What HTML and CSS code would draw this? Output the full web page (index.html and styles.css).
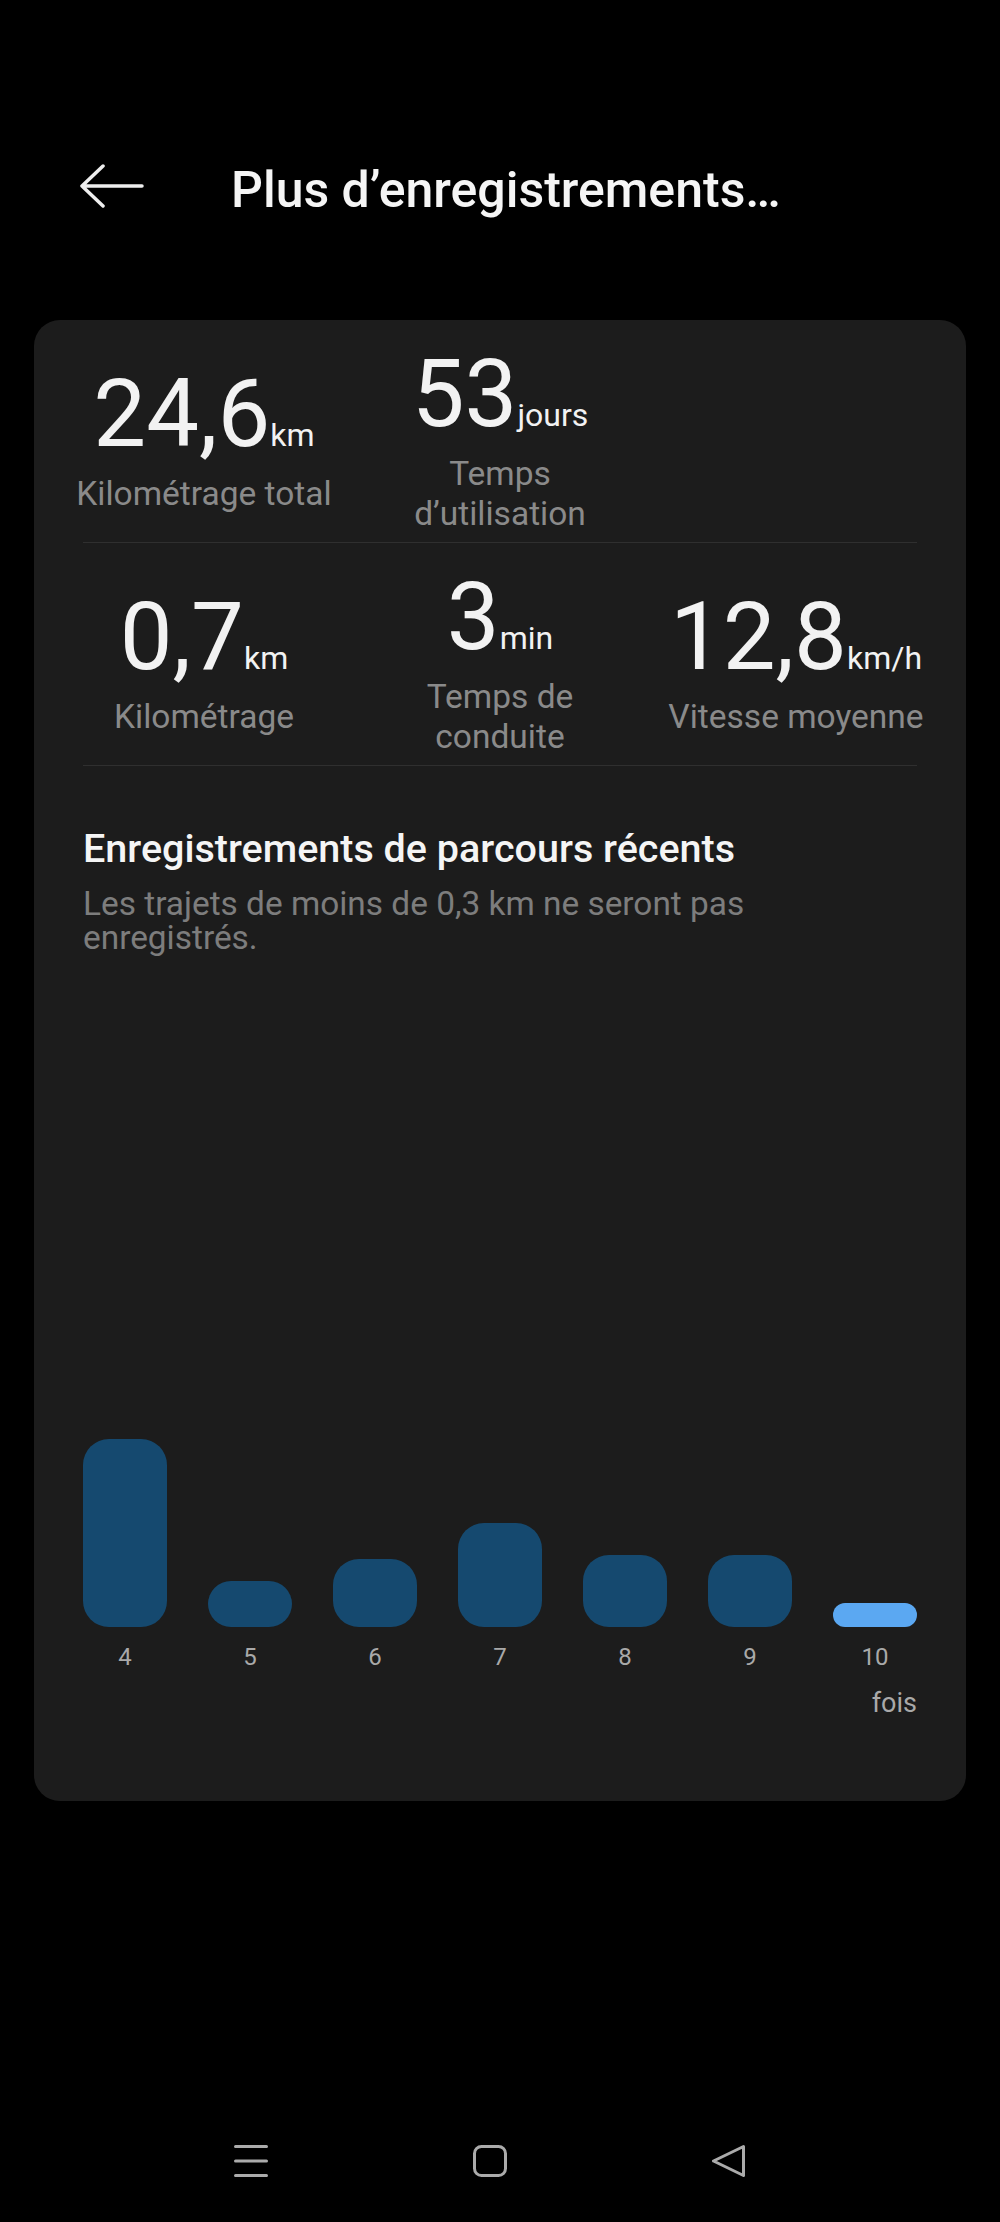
FILE: index.html
```html
<!DOCTYPE html>
<html lang="fr">
<head>
    <meta charset="UTF-8">
    <meta name="viewport" content="width=device-width, initial-scale=1.0">
    <title>Plus d'enregistrements</title>
    <link rel="stylesheet" href="styles.css">
</head>
<body>
    <div class="app">
        <header class="topbar">
            <svg class="back" width="64" height="44" viewBox="0 0 64 44" fill="none" stroke="#eeeeee" stroke-width="3.5" stroke-linecap="round" stroke-linejoin="round">
                <path d="M2 22H62M23 2L2 22L23 42"/>
            </svg>
            <h1 class="titre">Plus d’enregistrements…</h1>
        </header>

        <div class="carte">
            <div class="stats">
                <div class="stat">
                    <div class="valeur">24,6<span class="unite">km</span></div>
                    <div class="libelle">Kilométrage total</div>
                </div>
                <div class="stat">
                    <div class="valeur">53<span class="unite">jours</span></div>
                    <div class="libelle">Temps d’utilisation</div>
                </div>
                <div class="stat"></div>
            </div>
            <div class="separateur"></div>
            <div class="stats">
                <div class="stat">
                    <div class="valeur">0,7<span class="unite">km</span></div>
                    <div class="libelle">Kilométrage</div>
                </div>
                <div class="stat">
                    <div class="valeur">3<span class="unite">min</span></div>
                    <div class="libelle">Temps de conduite</div>
                </div>
                <div class="stat">
                    <div class="valeur">12,8<span class="unite">km/h</span></div>
                    <div class="libelle">Vitesse moyenne</div>
                </div>
            </div>
            <div class="separateur"></div>

            <div class="intro">
                <h2>Enregistrements de parcours récents</h2>
                <p>Les trajets de moins de 0,3 km ne seront pas enregistrés.</p>
            </div>

            <div class="graphique">
                <div class="barres">
                    <div class="colonne">
                        <div class="barre" style="height: 188px"></div>
                        <span class="jour">4</span>
                    </div>
                    <div class="colonne">
                        <div class="barre" style="height: 46px"></div>
                        <span class="jour">5</span>
                    </div>
                    <div class="colonne">
                        <div class="barre" style="height: 68px"></div>
                        <span class="jour">6</span>
                    </div>
                    <div class="colonne">
                        <div class="barre" style="height: 104px"></div>
                        <span class="jour">7</span>
                    </div>
                    <div class="colonne">
                        <div class="barre" style="height: 72px"></div>
                        <span class="jour">8</span>
                    </div>
                    <div class="colonne">
                        <div class="barre" style="height: 72px"></div>
                        <span class="jour">9</span>
                    </div>
                    <div class="colonne">
                        <div class="barre actif" style="height: 24px"></div>
                        <span class="jour">10</span>
                    </div>
                </div>
                <div class="axe">fois</div>
            </div>
        </div>

        <nav class="navigation">
            <svg width="34" height="32" viewBox="0 0 34 32" fill="none" stroke="#ababab" stroke-width="3" stroke-linecap="round">
                <path d="M1.5 1.5H32.5M1.5 16H32.5M1.5 30.5H32.5"/>
            </svg>
            <svg width="34" height="32" viewBox="0 0 34 32" fill="none" stroke="#ababab" stroke-width="3">
                <rect x="1.5" y="1.5" width="31" height="29" rx="7"/>
            </svg>
            <svg width="34" height="32" viewBox="0 0 34 32" fill="none" stroke="#ababab" stroke-width="3" stroke-linejoin="round">
                <path d="M31.5 1.5L1.5 16L31.5 30.5Z"/>
            </svg>
        </nav>
    </div>
</body>
</html>
```

FILE: styles.css
```css
body {
    margin: 0;
    background-color: #000;
    font-family: Roboto, "Noto Sans", Arial, sans-serif;
    color: #f2f2f2;
}
.app {
    height: 2222px;
    display: flex;
    flex-direction: column;
    overflow: hidden;
}
.topbar {
    display: flex;
    align-items: center;
    height: 60px;
    margin-top: 160px;
    padding-left: 80px;
}
.back {
    margin-bottom: 8px;
}
.titre {
    margin: 0 0 0 87px;
    font-size: 50px;
    font-weight: 500;
    line-height: 1.2;
    color: #f5f5f5;
}
.carte {
    background: #1c1c1c;
    border-radius: 26px;
    margin: 100px 34px 0;
    padding: 0 22px;
    height: 1481px;
    box-sizing: border-box;
}
.stats {
    display: grid;
    grid-template-columns: repeat(3, 1fr);
    align-items: center;
    padding: 24px 0 8px;
}
.stat {
    display: flex;
    flex-direction: column;
    align-items: center;
    padding: 0 15px;
    text-align: center;
}
.valeur {
    font-size: 94px;
    line-height: 100px;
    white-space: nowrap;
}
.unite {
    font-size: 32px;
    line-height: 1;
}
.libelle {
    margin-top: 10px;
    font-size: 33.5px;
    line-height: 40px;
    color: #8a8a8a;
}
.separateur {
    height: 1px;
    margin: 0 27px;
    background: #2f2f2f;
}
.intro {
    margin: 60px 27px 0;
    max-width: 700px;
}
.intro h2 {
    margin: 0;
    font-size: 39.5px;
    font-weight: 500;
    line-height: 46px;
    color: #f5f5f5;
}
.intro p {
    margin: 15px 0 0;
    font-size: 33.4px;
    line-height: 34px;
    color: #7d7d7d;
}
.graphique {
    margin: 72px 27px 0;
}
.barres {
    display: flex;
    gap: 41px;
    height: 644px;
    align-items: flex-end;
}
.colonne {
    width: 84px;
    display: flex;
    flex-direction: column;
    align-items: center;
}
.barre {
    width: 100%;
    border-radius: 26px;
    background-color: #15496f;
}
.barre.actif {
    background-color: #5ba8f2;
}
.jour {
    margin-top: 16px;
    font-size: 24px;
    line-height: 28px;
    color: #a9a9a9;
}
.axe {
    margin-top: 16px;
    text-align: right;
    font-size: 27px;
    line-height: 32px;
    color: #a9a9a9;
}
.navigation {
    margin-top: auto;
    height: 122px;
    display: flex;
    justify-content: center;
    align-items: center;
    gap: 205px;
    padding-right: 20px;
}
```
